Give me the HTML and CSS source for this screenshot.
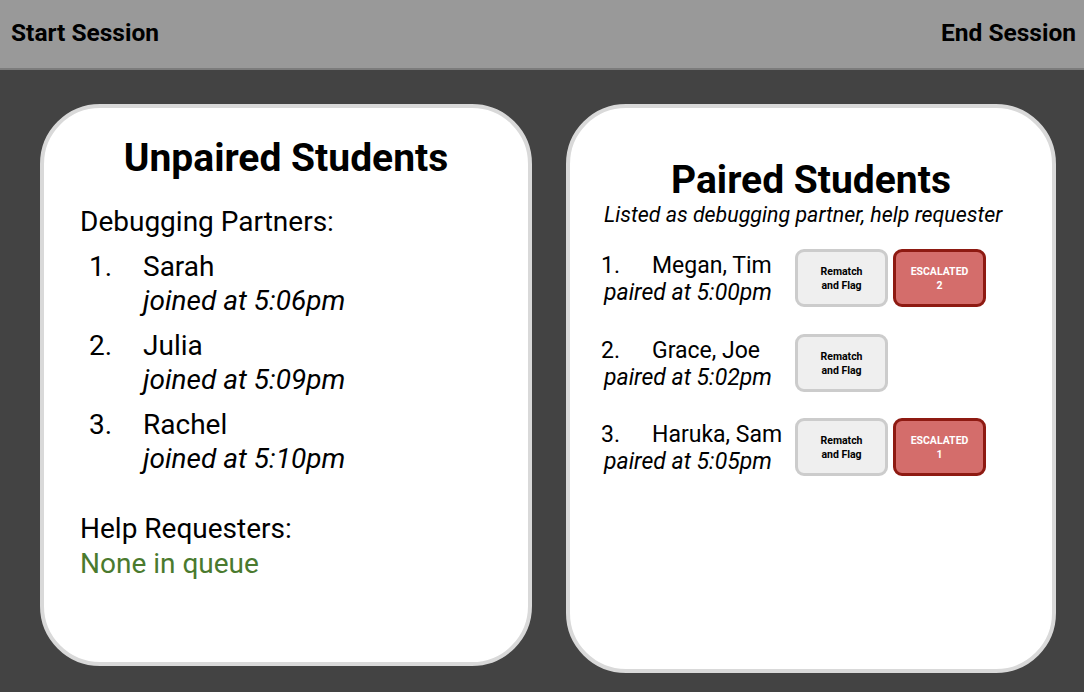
FILE: index.html
```html
<!DOCTYPE html>
<html lang="en">
<head>
  <meta charset="UTF-8" />
  <meta name="viewport" content="width=device-width, initial-scale=1.0"/>
  <title>Debugging Partners</title>
  <link rel="stylesheet" href="styles.css">
</head>
<body>
  <header class="topbar">
    <span class="session-link">Start Session</span>
    <span class="session-link">End Session</span>
  </header>

  <main class="board">
    <section class="card card-unpaired">
      <h2>Unpaired Students</h2>
      <p class="label">Debugging Partners:</p>
      <ol class="waiting">
        <li>
          <span class="num">1.</span>
          <span class="who">Sarah<br><em>joined at 5:06pm</em></span>
        </li>
        <li>
          <span class="num">2.</span>
          <span class="who">Julia<br><em>joined at 5:09pm</em></span>
        </li>
        <li>
          <span class="num">3.</span>
          <span class="who">Rachel<br><em>joined at 5:10pm</em></span>
        </li>
      </ol>
      <p class="label label-help">Help Requesters:</p>
      <p class="empty">None in queue</p>
    </section>

    <section class="card card-paired">
      <h2>Paired Students</h2>
      <p class="subtitle">Listed as debugging partner, help requester</p>
      <div class="pairs">
        <div class="pair">
          <div class="pair-text">
            <div><span class="pnum">1.</span>Megan, Tim</div>
            <em>paired at 5:00pm</em>
          </div>
          <button class="btn btn-rematch">Rematch<br>and Flag</button>
          <button class="btn btn-escalated">ESCALATED<br>2</button>
        </div>
        <div class="pair">
          <div class="pair-text">
            <div><span class="pnum">2.</span>Grace, Joe</div>
            <em>paired at 5:02pm</em>
          </div>
          <button class="btn btn-rematch">Rematch<br>and Flag</button>
        </div>
        <div class="pair">
          <div class="pair-text">
            <div><span class="pnum">3.</span>Haruka, Sam</div>
            <em>paired at 5:05pm</em>
          </div>
          <button class="btn btn-rematch">Rematch<br>and Flag</button>
          <button class="btn btn-escalated">ESCALATED<br>1</button>
        </div>
      </div>
    </section>
  </main>
</body>
</html>
```

FILE: styles.css
```css
* {
  box-sizing: border-box;
}

body {
  margin: 0;
  font-family: Roboto, "Liberation Sans", sans-serif;
  background: #434343;
  color: #000;
  height: 692px;
  overflow: hidden;
}

.topbar {
  display: flex;
  justify-content: space-between;
  align-items: center;
  height: 70px;
  padding: 0 8px 4px 11px;
  background: #999999;
  border-bottom: 2px solid #7c7c7c;
}

.session-link {
  font-size: 24.5px;
  font-weight: 700;
}

.board {
  display: flex;
  gap: 34px;
  padding: 34px 0 0 40px;
}

.card {
  background: #fff;
  border: 4px solid #d9d9d9;
  border-radius: 60px;
}

.card h2 {
  margin: 0;
  font-size: 39px;
  font-weight: 700;
  text-align: center;
  line-height: 44px;
}

/* left card */
.card-unpaired {
  width: 492px;
  height: 562px;
  padding: 28px 0 0 36px;
}

.card-unpaired h2 {
  margin-left: -36px;
}

.label {
  margin: 26px 0 0;
  font-size: 28px;
  line-height: 32px;
}

.waiting {
  list-style: none;
  margin: 12px 0 0;
  padding: 0 0 0 9px;
  font-size: 28px;
  line-height: 34px;
}

.waiting li {
  display: flex;
  margin-bottom: 11px;
}

.waiting .num {
  width: 54px;
}

.label-help {
  margin-top: 37px;
}

.empty {
  margin: 3px 0 0;
  font-size: 28px;
  line-height: 32px;
  color: #4a7a2e;
}

/* right card */
.card-paired {
  width: 490px;
  height: 569px;
  padding: 50px 0 0 31px;
}

.card-paired h2 {
  margin-left: -31px;
}

.subtitle {
  margin: 1px 0 0;
  padding-left: 3px;
  font-size: 21.4px;
  font-style: italic;
  line-height: 24px;
}

.pairs {
  display: flex;
  flex-direction: column;
  gap: 26.5px;
  margin-top: 22px;
}

.pair {
  display: flex;
  gap: 5px;
}

.pair-text {
  width: 189px;
  padding-top: 3px;
  font-size: 23px;
  line-height: 27px;
}

.pnum {
  display: inline-block;
  width: 51px;
}

.pair-text em {
  padding-left: 3px;
}

.btn {
  width: 93px;
  height: 58px;
  border-radius: 9px;
  border: 3px solid #cccccc;
  background: #efefef;
  font-family: Roboto, "Liberation Sans", sans-serif;
  font-size: 10.5px;
  font-weight: 700;
  line-height: 14px;
  color: #000;
  padding: 2px 0 0;
}

.btn-escalated {
  background: #d46d6b;
  border-color: #8e1a12;
  color: #fff;
}
```
